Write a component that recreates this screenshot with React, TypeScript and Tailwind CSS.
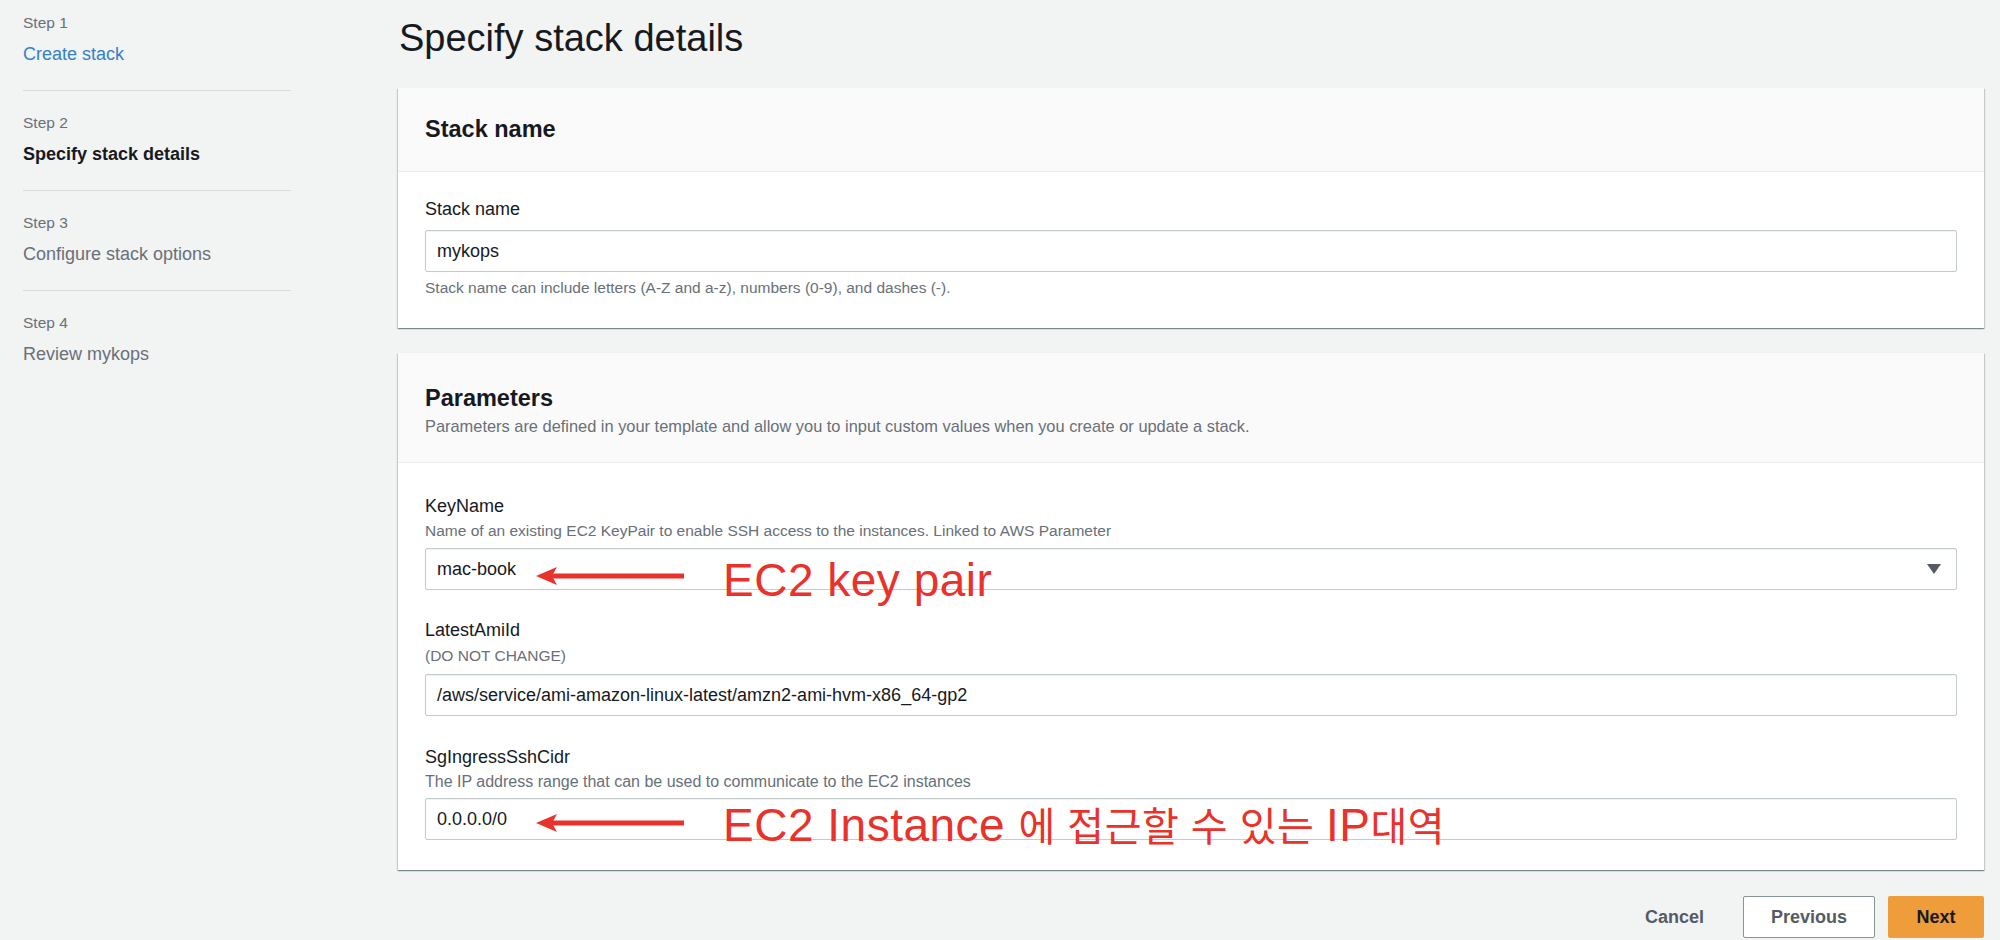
import React from "react";

const steps = [
  { step: "Step 1", name: "Create stack", state: "link" },
  { step: "Step 2", name: "Specify stack details", state: "active" },
  { step: "Step 3", name: "Configure stack options", state: "idle" },
  { step: "Step 4", name: "Review mykops", state: "idle" },
];

const cardShadow =
  "bg-white shadow-[0_1px_1px_0_rgba(0,28,36,0.3),1px_1px_1px_0_rgba(0,28,36,0.15),-1px_1px_1px_0_rgba(0,28,36,0.15)]";

function Arrow() {
  return (
    <svg width="148" height="18" viewBox="0 0 148 18" className="block">
      <path d="M0 9 L21 0 L16 9 L21 18 Z" fill="#e8322b" />
      <rect x="14" y="6.5" width="134" height="5" fill="#e8322b" />
    </svg>
  );
}

function Field({
  label,
  desc,
  descClass = "mt-[3px] text-[15.5px]",
  children,
  className = "",
}: {
  label: string;
  desc?: string;
  descClass?: string;
  children: React.ReactNode;
  className?: string;
}) {
  return (
    <div className={className}>
      <p className="text-[18px] leading-[24px] text-[#16191f]">{label}</p>
      {desc ? <p className={`${descClass} leading-[20px] text-[#687078]`}>{desc}</p> : null}
      {children}
    </div>
  );
}

function Box({ value, children }: { value: string; children?: React.ReactNode }) {
  return (
    <div className="relative h-[42px] rounded-[2px] border border-[#c3cbcb] bg-white px-[11px] flex items-center shadow-[inset_0_1px_1px_rgba(0,0,0,0.06)]">
      <span className="text-[18px] text-[#16191f]">{value}</span>
      {children}
    </div>
  );
}

export default function App() {
  return (
    <div
      className="w-[2000px] h-[940px] bg-[#f2f3f3] flex overflow-hidden"
      style={{ fontFamily: "'Liberation Sans', Arial, 'Noto Sans CJK KR', sans-serif" }}
    >
      {/* wizard steps */}
      <div className="w-[398px] shrink-0 pl-[23px] pt-[13px]">
        <div className="w-[268px]">
          {steps.map((s, i) => (
            <div
              key={s.step}
              className={`${i > 0 ? "pt-[22px]" : ""} ${
                i < steps.length - 1 ? "pb-[24px] border-b border-[#d5dbdb]" : ""
              }`}
            >
              <p className="text-[15.5px] leading-[20px] text-[#687078]">{s.step}</p>
              <p
                className={`mt-[9px] text-[18px] leading-[24px] ${
                  s.state === "link"
                    ? "text-[#3580c6]"
                    : s.state === "active"
                    ? "font-bold text-[#16191f]"
                    : "text-[#687078]"
                }`}
              >
                {s.name}
              </p>
            </div>
          ))}
        </div>
      </div>

      {/* main */}
      <div className="flex-1 pr-[16px] pt-[16px]">
        <h1 className="text-[38px] leading-[44px] text-[#16191f] pl-[1px]">Specify stack details</h1>

        {/* stack name card */}
        <div className={`mt-[28px] ${cardShadow}`}>
          <div className="h-[84px] bg-[#fafafa] border-b border-[#eaeded] px-[27px] flex items-center">
            <h2 className="text-[23.5px] font-bold text-[#16191f]">Stack name</h2>
          </div>
          <div className="px-[27px] pt-[25px] pb-[30px]">
            <Field label="Stack name">
              <div className="mt-[9px]">
                <Box value="mykops" />
              </div>
              <p className="mt-[6px] text-[15.5px] leading-[20px] text-[#687078]">
                Stack name can include letters (A-Z and a-z), numbers (0-9), and dashes (-).
              </p>
            </Field>
          </div>
        </div>

        {/* parameters card */}
        <div className={`mt-[25px] ${cardShadow}`}>
          <div className="bg-[#fafafa] border-b border-[#eaeded] px-[27px] pt-[30px] pb-[26px]">
            <h2 className="text-[23.5px] leading-[30px] font-bold text-[#16191f]">Parameters</h2>
            <p className="mt-[3px] text-[16.4px] leading-[20px] text-[#687078]">
              Parameters are defined in your template and allow you to input custom values when you create or update a stack.
            </p>
          </div>
          <div className="px-[27px] pt-[31px] pb-[30px]">
            <Field
              label="KeyName"
              desc="Name of an existing EC2 KeyPair to enable SSH access to the instances. Linked to AWS Parameter"
            >
              <div className="mt-[7px]">
                <Box value="mac-book">
                  <div className="absolute left-[110px] top-[18px]">
                    <Arrow />
                  </div>
                  <span
                    className="absolute left-[297px] top-[8px] text-[46px] tracking-[0.5px] leading-none text-[#e8322b] whitespace-nowrap"
                    style={{ fontFamily: "'Liberation Sans', 'Noto Sans CJK KR', sans-serif" }}
                  >
                    EC2 key pair
                  </span>
                  <svg
                    width="14"
                    height="10"
                    viewBox="0 0 14 10"
                    className="absolute right-[15px] top-[15px]"
                  >
                    <path d="M0 0 H14 L7 10 Z" fill="#545b64" />
                  </svg>
                </Box>
              </div>
            </Field>

            <Field
              label="LatestAmiId"
              desc="(DO NOT CHANGE)"
              descClass="mt-[4px] text-[15.5px]"
              className="mt-[28px]"
            >
              <div className="mt-[8px]">
                <Box value="/aws/service/ami-amazon-linux-latest/amzn2-ami-hvm-x86_64-gp2" />
              </div>
            </Field>

            <Field
              label="SgIngressSshCidr"
              desc="The IP address range that can be used to communicate to the EC2 instances"
              descClass="mt-[3px] text-[16px]"
              className="mt-[29px]"
            >
              <div className="mt-[6px]">
                <Box value="0.0.0.0/0">
                  <div className="absolute left-[110px] top-[15px]">
                    <Arrow />
                  </div>
                  <span
                    className="absolute left-[297px] top-[3px] text-[46px] tracking-[0.5px] leading-none text-[#e8322b] whitespace-nowrap"
                    style={{ fontFamily: "'Liberation Sans', 'Noto Sans CJK KR', sans-serif" }}
                  >
                    EC2 Instance <span className="text-[40px]">에 접근할 수 있는 </span>IP
                    <span className="text-[40px]">대역</span>
                  </span>
                </Box>
              </div>
            </Field>
          </div>
        </div>

        {/* actions */}
        <div className="mt-[26px] flex justify-end items-center">
          <button className="h-[42px] px-[20px] text-[18px] font-bold text-[#545b64]">Cancel</button>
          <button className="ml-[19px] h-[42px] w-[132px] rounded-[2px] border border-[#879596] bg-white text-[18px] font-bold text-[#545b64]">
            Previous
          </button>
          <button className="ml-[13px] h-[42px] w-[96px] rounded-[2px] bg-[#ef9c3a] text-[18px] font-bold text-[#16191f]">
            Next
          </button>
        </div>
      </div>
    </div>
  );
}
